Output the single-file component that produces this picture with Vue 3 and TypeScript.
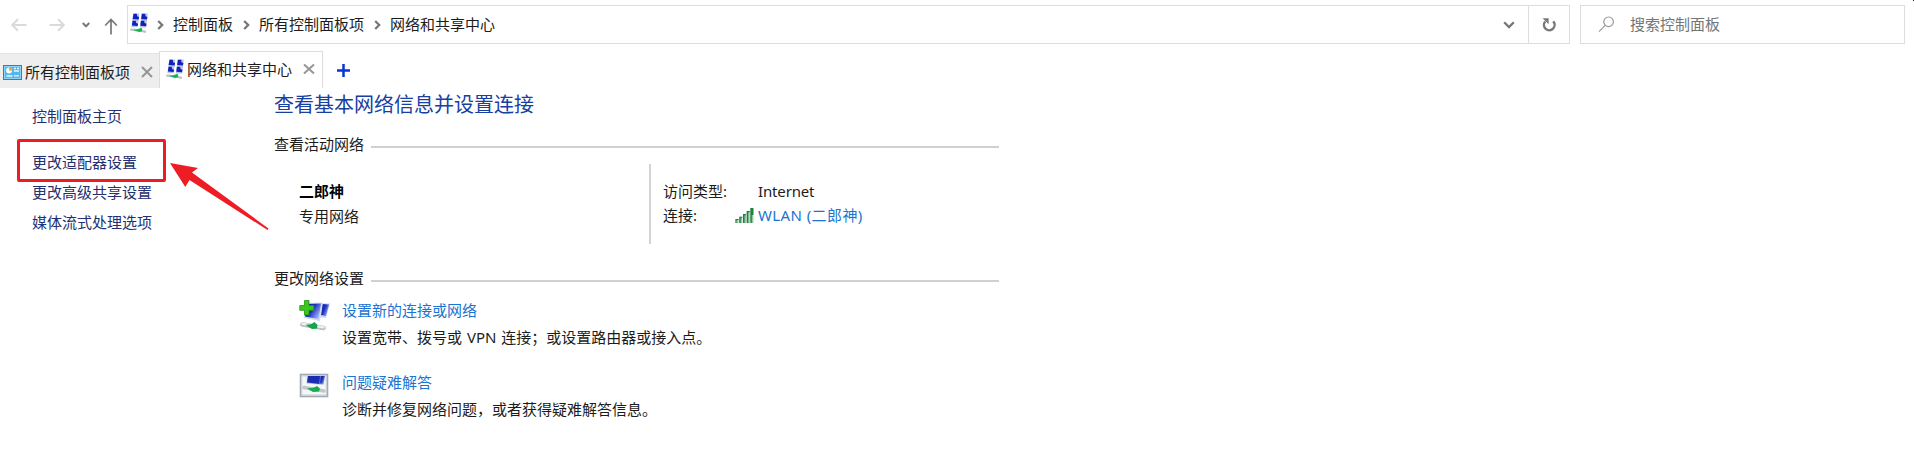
<script setup lang="ts">
interface NetAction {
  kind: 'new' | 'troubleshoot'
  title: string
  desc: string
}

const crumbs: string[] = ['控制面板', '所有控制面板项', '网络和共享中心']
const tasks: string[] = ['更改适配器设置', '更改高级共享设置', '媒体流式处理选项']
const actions: NetAction[] = [
  { kind: 'new', title: '设置新的连接或网络', desc: '设置宽带、拨号或 VPN 连接；或设置路由器或接入点。' },
  { kind: 'troubleshoot', title: '问题疑难解答', desc: '诊断并修复网络问题，或者获得疑难解答信息。' },
]
</script>

<template>
  <div class="window">
    <svg width="0" height="0" class="defs">
      <defs>
        <linearGradient id="screen" x1="0" y1="0" x2="1" y2="0.6">
          <stop offset="0" stop-color="#0a1c9c" />
          <stop offset="0.5" stop-color="#1a2fc4" />
          <stop offset="1" stop-color="#a3b4f2" />
        </linearGradient>
        <symbol id="net" viewBox="0 0 18 20">
          <path d="M3.300.5h6l-.6 7.200H2.300zM11.600.5h6.200l-.8 7.200h-6zM2.400 7.500h6l-.6 6.700H1.300zM10.800 7.500h6.200l-.8 7H9.900z" fill="#b9c3ea" />
          <path d="M3.500.8h3.300l.3 2.500 2 .6-.5 2.700-6-.5zM11.900.8h3.300l.3 2.500 1.900.6-.5 2.700-5.800-.5zM2.500 7.700h3.300l.3 2.400 2 .6-.5 2.400-5.700-.6zM10.900 7.700h3.300l.3 2.400 2 .6-.5 2.600-5.700-.6z" fill="#1220bd" />
          <path d="M.2 16.600l5 .3M11 17.600l5 1.400" stroke="#bcc5c4" stroke-width="2.200" />
          <path d="M3.400 16.800l4.500-.7 2.800-1.200 1.500.6-.3 3-2.800.5-3.700-.9z" fill="#18b553" />
        </symbol>
      </defs>
    </svg>

    <header class="toolbar">
      <nav class="nav">
        <svg class="back" width="16" height="14" viewBox="0 0 16 14"><path d="M15.5 7H1.5M7 1.2L1.2 7 7 12.8" /></svg>
        <svg class="forward" width="16" height="14" viewBox="0 0 16 14"><path d="M.5 7h14M9 1.2L14.8 7 9 12.8" /></svg>
        <svg class="recent" width="8" height="6" viewBox="0 0 8 6"><path d="M.8 1L4 4.4 7.2 1" /></svg>
        <svg class="up" width="14" height="17" viewBox="0 0 14 17"><path d="M7 16.5V1.5M1.2 7.5L7 1.5l5.8 6" /></svg>
      </nav>
      <div class="address">
        <svg class="net" width="18" height="20"><use href="#net" /></svg>
        <template v-for="c in crumbs" :key="c">
          <svg class="sep" width="7" height="10" viewBox="0 0 7 10"><path d="M1.2 1L5.2 5l-4 4" /></svg>
          <span class="crumb">{{ c }}</span>
        </template>
        <svg class="drop" width="12" height="8" viewBox="0 0 12 8"><path d="M1.200 1.200L6 6l4.800-4.800" /></svg>
        <button class="refresh" type="button">
          <svg width="16" height="16" viewBox="0 0 16 16">
            <path d="M4.200 4.600a5.300 5.300 0 1 0 8-.2" class="ring" />
            <path d="M1.600 1.200h6v6z" class="tip" />
          </svg>
        </button>
      </div>
      <div class="search">
        <svg width="17" height="17" viewBox="0 0 17 17"><circle cx="10.6" cy="5.8" r="4.8" /><path d="M7.2 9.3L1 15.6" /></svg>
        <span>搜索控制面板</span>
      </div>
    </header>

    <div class="tabs">
      <div class="tab idle">
        <svg class="panel" width="19" height="15" viewBox="0 0 19 15">
          <rect x=".5" y=".5" width="18" height="14" fill="#54b7ec" stroke="#2a83bd" />
          <rect x="1.5" y="1.5" width="16" height="12" fill="none" stroke="#8ad4f7" />
          <circle cx="6" cy="5.6" r="3" fill="#f4fbff" />
          <path d="M6 5.6V2.6a3 3 0 0 1 3 3z" fill="#f29a3d" />
          <path d="M11 3.5h2M14 3.5h2M11 6h5M3.5 11h6M11 10.8h5" stroke="#e8f8ff" stroke-width="1.3" />
        </svg>
        <span>所有控制面板项</span>
        <svg class="close" width="12" height="12" viewBox="0 0 12 12"><path d="M1 1l10 10M11 1L1 11" /></svg>
      </div>
      <div class="tab active">
        <svg class="net" width="18" height="20"><use href="#net" /></svg>
        <span>网络和共享中心</span>
        <svg class="close" width="12" height="12" viewBox="0 0 12 12"><path d="M1 1.500l10 9M11 1.500l-10 9" /></svg>
      </div>
      <svg class="add" width="13" height="13" viewBox="0 0 13 13"><path d="M6.5 0v13M0 6.5h13" /></svg>
    </div>

    <div class="body">
      <aside class="side">
        <a class="home">控制面板主页</a>
        <a v-for="t in tasks" :key="t" class="task">{{ t }}</a>
        <div class="mark"></div>
        <svg class="arrow" width="100" height="70" viewBox="0 0 100 70"><path d="M0 0L28 5l-6 4.500L98.500 65.500l-1 1.500L19.500 17l-4.200 7z" /></svg>
      </aside>

      <main class="main">
        <h1>查看基本网络信息并设置连接</h1>
        <div class="section"><span>查看活动网络</span><i></i></div>
        <div class="active-net">
          <div class="who">
            <strong>二郎神</strong>
            <span>专用网络</span>
          </div>
          <div class="info">
            <div class="line"><span class="label">访问类型:</span><span class="type">Internet</span></div>
            <div class="line wlan">
              <span class="label">连接:
                <svg width="19" height="17" viewBox="0 0 19 17">
                  <path d="M.5 12h3v4h-3zM4.300 9.700h3V16h-3zM8 7h3v9H8zM11.700 4h3v12h-3zM15.400 1h3v15h-3z" fill="#93c7a1" />
                  <path d="M.5 12h3v1h-2v3h-1zM4.300 9.700h3v1h-1.600V16H4.300zM8 7h3v1.200H9.500V16H8zM11.700 4h3v1.300h-1.500V16h-1.500zM15.400 1h3v7h-1.600v8h-1.400z" fill="#237f42" />
                </svg>
              </span>
              <a>WLAN (二郎神)</a>
            </div>
          </div>
        </div>
        <div class="section second"><span>更改网络设置</span><i></i></div>
        <div v-for="a in actions" :key="a.kind" class="action">
          <svg v-if="a.kind === 'new'" width="32" height="32" viewBox="0 0 32 32">
            <path d="M19 3l12 .5-4 14.500-8-1z" fill="#cfd7ef" />
            <path d="M23 4l7 .5-3 11.500-5-1z" fill="url(#screen)" />
            <path d="M6 3l18-.5L21 21 5 18z" fill="#d3daee" />
            <path d="M7.500 4l14.500-.5L19.500 19 6 16.500z" fill="url(#screen)" />
            <path d="M3.500 24.500l21 3.500" stroke="#b8c2bf" stroke-width="4.500" stroke-linecap="round" />
            <path d="M3.500 23.800l21 3.500" stroke="#edf1ef" stroke-width="2.200" stroke-linecap="round" />
            <path d="M6.500 25l6-1 3-2 3 3-.5 3.500-5 .4z" fill="#16a34d" />
            <path d="M5.500.5h4.500v5h4.800v4.800H10v4.600H5.500v-4.600H.8V5.500h4.700z" fill="#3cc61d" stroke="#22960f" stroke-width=".8" />
          </svg>
          <svg v-else width="32" height="32" viewBox="0 0 32 32">
            <rect x="1.500" y="2.500" width="27" height="22" fill="#dfe3e8" stroke="#a2a9b2" stroke-width="1.600" />
            <rect x="3.500" y="5" width="23" height="17" fill="#f4f7fa" />
            <path d="M8 4l18-.5-1.500 9.500-17-1.500z" fill="#b9c4e4" />
            <path d="M9 4h12l-.5 8L8 10.500z" fill="#1a2caf" />
            <path d="M21.500 4H26l-1.500 8-3.500-.5z" fill="url(#screen)" />
            <path d="M5 15.500l20 3.500" stroke="#c0c9c4" stroke-width="3.600" stroke-linecap="round" />
            <path d="M8 16.500l7-1 3-1.500 3 2.500-1 3-6 .5z" fill="#18aa50" />
          </svg>
          <div class="texts">
            <a>{{ a.title }}</a>
            <span>{{ a.desc }}</span>
          </div>
        </div>
      </main>
    </div>
    <div class="corner"></div>
  </div>
</template>

<style>
body {
  background: #fff;
  overflow: hidden;
}
</style>

<style scoped>
.window {
  position: relative;
  height: 461px;
  overflow: hidden;
  background: #fff;
  color: #1c1c1c;
  font: 15px/24px "Noto Sans", "Noto Sans CJK SC", sans-serif;
  white-space: nowrap;
}
.window * { box-sizing: border-box; }
svg { display: block; flex: none; fill: none; }
.defs { position: absolute; }
.toolbar { display: flex; padding-top: 5px; height: 51px; }
.nav { display: flex; align-items: center; width: 127px; height: 39px; padding-left: 11px; }
.nav path { stroke: #dadada; stroke-width: 2; }
.forward { margin-left: 22px; }
.recent { margin-left: 17px; }
.nav .recent path { stroke: #777; }
.up { margin: 3px 0 0 14px; }
.nav .up path { stroke: #777; stroke-width: 1.7; }
.address { display: flex; align-items: center; width: 1443px; height: 39px; border: 1px solid #ddd; padding-left: 2px; }
.address .net { margin-top: -3px; }
.sep { margin: 0 9px 0 10px; }
.net + .sep { margin: 0 9px; }
.sep path, .drop path { stroke: #777; stroke-width: 2.3; }
.crumb { margin-top: -2px; }
.drop { margin-left: auto; margin-right: 13px; }
.refresh { display: flex; align-items: center; justify-content: center; width: 41px; height: 37px; border: 0; border-left: 1px solid #ddd; background: #fff; padding: 0; }
.ring { stroke: #777; stroke-width: 2.4; }
.tip { fill: #777; }
.search { display: flex; align-items: center; width: 325px; height: 39px; margin-left: 10px; border: 1px solid #ddd; padding-left: 17px; color: #757575; }
.search svg { stroke: #999; stroke-width: 1.2; margin-right: 15px; }
.search span { margin-top: -1px; }
.tabs { display: flex; height: 37px; }
.tab { display: flex; align-items: center; }
.idle { width: 159px; height: 35px; margin-top: 2px; padding-left: 3px; background: #eee; padding-top: 2px; border-top: 1px solid #e4e4e4; }
.panel { margin-right: 3px; }
.active { width: 164px; border: 1px solid #ddd; border-bottom: 0; padding: 0 0 2px 6px; }
.active .net { margin-right: 3px; }
.close { margin-left: 12px; stroke: #969696; stroke-width: 2; }
.idle .close { margin-left: 11px; }
.active .close { margin-left: 11px; }
.add { margin: 13px 0 0 14px; stroke: #0a35d0; stroke-width: 2.5; }
.body { display: flex; }
.side { position: relative; display: flex; flex-direction: column; width: 274px; padding: 16px 0 0 32px; color: #24306f; }
.home { margin-bottom: 19px; }
.task { line-height: 30px; }
.mark { position: absolute; left: 17px; top: 51px; width: 149px; height: 43px; border: 3px solid #ee1c25; border-radius: 2px; }
.arrow { position: absolute; left: 170px; top: 75px; fill: #ee1c25; }
.main { width: 725px; }
h1 { margin: 0; font-size: 20px; font-weight: 400; line-height: 34px; color: #17409f; }
.section { display: flex; align-items: center; gap: 7px; margin-top: 10px; }
.section i { flex: 1; height: 2px; margin-top: 5px; background: #d0d0d0; }
.active-net { display: flex; height: 80px; margin-top: 8px; }
.who { display: flex; flex-direction: column; width: 375px; padding: 15px 0 0 25px; line-height: 25px; }
.who strong { color: #000; }
.info { border-left: 2px solid #d3d3d3; padding: 15px 0 0 12px; }
.line { display: flex; line-height: 25px; }
.label { display: flex; justify-content: space-between; align-items: center; width: 95px; padding-right: 4px; }
.type { letter-spacing: -0.15px; }
.wlan { margin-top: -1px; }
.wlan a { letter-spacing: 0.4px; }
a { color: #1b74d2; }
.side a { color: #24306f; }
.section.second { margin-top: 22px; }
.action { display: flex; padding-left: 25px; height: 72px; }
.action > svg { margin: 10px 11px 0 0; }
.texts { display: flex; flex-direction: column; padding-top: 7px; line-height: 27px; word-spacing: 1px; }
.corner { position: absolute; right: 0; top: 0; width: 1px; height: 1px; background: #222; }
</style>
